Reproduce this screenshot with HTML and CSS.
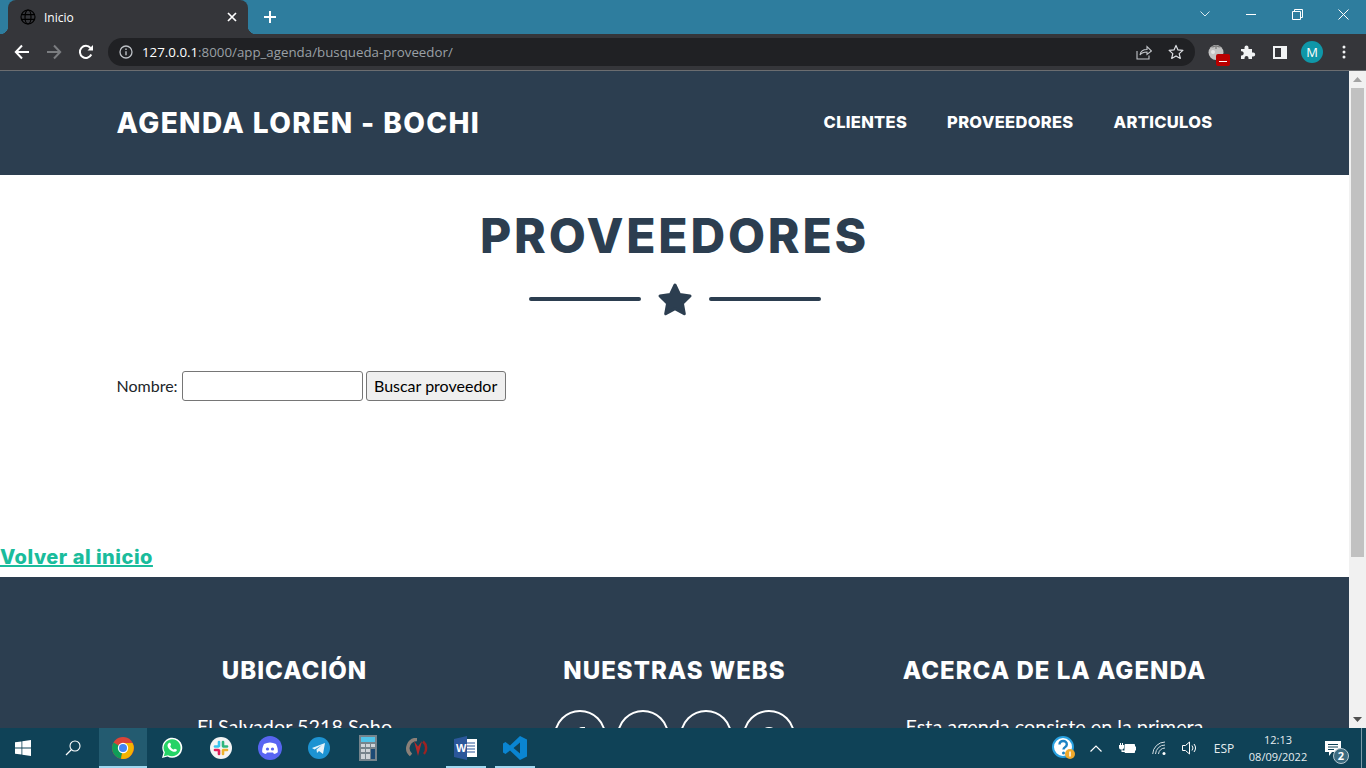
FILE: index.html
```html
<!DOCTYPE html>
<html lang="es">
<head>
<meta charset="utf-8">
<title>Inicio</title>
<link rel="stylesheet" href="styles.css">
</head>
<body>
<div class="screen">
  <header class="browser">
    <div class="tabstrip">
      <div class="tab">
        <svg class="tab-globe" viewBox="0 0 16 16" width="16" height="16"><g fill="none" stroke="#000" stroke-width="1.2"><circle cx="8" cy="8" r="7"/><ellipse cx="8" cy="8" rx="3" ry="7"/><path d="M1 5.6h14M1 10.4h14"/></g></svg>
        <span class="tab-title">Inicio</span>
        <svg class="tab-close" viewBox="0 0 10 10" width="10" height="10"><path d="M1 1l8 8M9 1l-8 8" stroke="#fff" stroke-width="1.7"/></svg>
      </div>
      <svg class="tab-new" viewBox="0 0 12 12" width="12" height="12"><path d="M6 0v12M0 6h12" stroke="#fff" stroke-width="2"/></svg>
      <div class="winctl">
        <span class="winbtn"><svg viewBox="0 0 10 6" width="10" height="6"><path d="M.5.5l4.5 4.500 4.500-4.500" fill="none" stroke="#d8e8ef" stroke-width="1"/></svg></span>
        <span class="winbtn"><svg viewBox="0 0 10 1" width="10" height="1"><path d="M0 .5h10" stroke="#fff"/></svg></span>
        <span class="winbtn"><svg viewBox="0 0 11 11" width="11" height="11"><path d="M.5 2.500h8v8h-8zM2.500 2.500v-2h8v8h-2" fill="none" stroke="#fff"/></svg></span>
        <span class="winbtn"><svg viewBox="0 0 11 11" width="11" height="11"><path d="M.5.5l10 10M10.500.5l-10 10" stroke="#fff"/></svg></span>
      </div>
    </div>
    <div class="toolbar">
      <span class="navbtn"><svg viewBox="0 0 16 16" width="16" height="16"><path d="M15 8H2M8 1.500L1.800 8 8 14.500" fill="none" stroke="#fff" stroke-width="2"/></svg></span>
      <span class="navbtn"><svg viewBox="0 0 16 16" width="16" height="16"><path d="M1 8h13M8 1.500L14.200 8 8 14.500" fill="none" stroke="#7b7d80" stroke-width="2"/></svg></span>
      <span class="navbtn"><svg viewBox="0 0 16 16" width="16" height="16"><path d="M13.300 10.500A6 6 0 1 1 12.500 4" fill="none" stroke="#fff" stroke-width="2"/><path d="M9.500 6.500H15V1z" fill="#fff"/></svg></span>
      <div class="omnibox">
        <svg class="omni-info" viewBox="0 0 14 14" width="14" height="14"><circle cx="7" cy="7" r="6" fill="none" stroke="#bdc1c6" stroke-width="1.300"/><path d="M7 6.200v4M7 3.400v1.500" stroke="#bdc1c6" stroke-width="1.400"/></svg>
        <span class="url"><span class="url-host">127.0.0.1</span>:8000/app_agenda/busqueda-proveedor/</span>
        <span class="omni-actions">
          <svg viewBox="0 0 16 16" width="16" height="16"><path d="M1 7v8h12v-3.500M4 11c.5-3.500 3-5.500 7-5.500V2.500L15.500 7 11 10.500V8C8 8 5.500 9 4 11z" fill="none" stroke="#c4c7cb" stroke-width="1.100"/></svg>
          <svg viewBox="0 0 16 16" width="16" height="16"><path d="M8 1.400l2 4.500 4.900.5-3.700 3.200 1.100 4.800L8 11.900l-4.300 2.500 1.100-4.800L1.100 6.400 6 5.900z" fill="none" stroke="#dfe1e5" stroke-width="1.200" stroke-linejoin="round"/></svg>
        </span>
      </div>
      <div class="extensions">
        <span class="ext ext-tomato"><svg viewBox="0 0 16 16" width="16" height="16"><circle cx="8" cy="8.500" r="7.500" fill="#c2c2c2"/><path d="M8 1.500c-1.500 1-3 1.500-4.500 1.500M8 1.500c1.500 1 3 1.500 4.500 1.500M8 1v4" fill="none" stroke="#777" stroke-width="1.200"/><circle cx="5" cy="8" r="2" fill="#e4e4e4"/></svg><span class="ext-badge"></span></span>
        <span class="ext"><svg viewBox="0 0 16 16" width="16" height="16"><path d="M1 5h3.500V3.500a2 2 0 0 1 4 0V5H12v3.500h1.200a2 2 0 0 1 0 4H12V15H8.500v-1a2 2 0 0 0-4 0v1H1v-3.500h1a2.200 2.200 0 0 0 0-4.300H1z" fill="#f1f3f4"/></svg></span>
        <span class="ext"><svg viewBox="0 0 14 13" width="14" height="13"><path d="M0 0h14v13H0z" fill="#f1f3f4"/><path d="M2 2h6v9H2z" fill="#35363a"/></svg></span>
        <span class="ext"><span class="avatar">M</span></span>
        <span class="ext"><svg viewBox="0 0 4 14" width="4" height="14"><g fill="#f1f3f4"><circle cx="2" cy="2" r="1.500"/><circle cx="2" cy="7" r="1.500"/><circle cx="2" cy="12" r="1.500"/></g></svg></span>
      </div>
    </div>
  </header>

  <div class="viewport">
    <div class="page">
      <nav class="topnav">
        <div class="container topnav-inner">
          <a class="brand" href="#">AGENDA LOREN - BOCHI</a>
          <ul class="menu">
            <li><a href="#">CLIENTES</a></li>
            <li><a href="#">PROVEEDORES</a></li>
            <li><a href="#">ARTICULOS</a></li>
          </ul>
        </div>
      </nav>
      <section class="masthead">
        <h1 class="title">PROVEEDORES</h1>
        <div class="divider">
          <span class="divider-line"></span>
          <svg class="divider-star" viewBox="0 0 36 34" width="36" height="34"><path d="M18 3l4.600 9.600 10.400 1.400-7.600 7.300 1.900 10.400L18 26.700l-9.300 5 1.900-10.400L3 14l10.400-1.400z" fill="#2c3e50" stroke="#2c3e50" stroke-width="3" stroke-linejoin="round"/></svg>
          <span class="divider-line"></span>
        </div>
        <form class="search container">
          <label class="search-label" for="nombre">Nombre:</label>
          <input class="search-input" id="nombre" type="text">
          <button class="search-btn" type="button">Buscar proveedor</button>
        </form>
      </section>
      <a class="back" href="#">Volver al inicio</a>
      <footer class="footer">
        <div class="container footer-grid">
          <div class="footer-col">
            <h4>UBICACIÓN</h4>
            <p>El Salvador 5218 Soho</p>
          </div>
          <div class="footer-col">
            <h4>NUESTRAS WEBS</h4>
            <div class="socials">
              <span class="social"><svg viewBox="0 0 10 18" width="10" height="18"><path d="M3 18V10H0V7h3V4c0-3 2-4 4-4h3v3H8C7 3 6.500 3.500 6.500 4.500V7H10l-.5 3h-3v8z" fill="#fff"/></svg></span>
              <span class="social"><svg viewBox="0 0 18 15" width="18" height="15"><path d="M18 2l-2 1 1.500-2-2.300.8A3.700 3.700 0 0 0 9 5C6 5 3 3.500 1.500 1 .5 3 1 5 2.500 6.500L1 6c0 2 1 3.300 3 4H2.500c.5 1.500 2 2.500 3.500 2.500C4.500 14 2 14.500 0 14c6 3 16 1 16-9.500z" fill="#fff"/></svg></span>
              <span class="social"><svg viewBox="0 0 16 16" width="16" height="16"><path d="M0 5.500h3.500V16H0zM1.700 0a2 2 0 1 1 0 4 2 2 0 0 1 0-4zM6 5.500h3.200V7c.6-1 1.800-1.800 3.300-1.800C15.500 5.200 16 7.500 16 10v6h-3.500v-5.500c0-1.500-.3-2.500-1.600-2.500-1.400 0-1.900 1-1.900 2.500V16H6z" fill="#fff"/></svg></span>
              <span class="social"><svg viewBox="0 0 18 18" width="18" height="18"><circle cx="9" cy="9" r="8" fill="none" stroke="#fff" stroke-width="2"/></svg></span>
            </div>
          </div>
          <div class="footer-col">
            <h4>ACERCA DE LA AGENDA</h4>
            <p>Esta agenda consiste en la primera</p>
          </div>
        </div>
      </footer>
    </div>
    <div class="scrollbar">
      <span class="scroll-arrow"><svg viewBox="0 0 9 5" width="9" height="5"><path d="M4.500 0L9 5H0z" fill="#a3a3a3"/></svg></span>
      <span class="scroll-track"><span class="scroll-thumb"></span></span>
      <span class="scroll-arrow"><svg viewBox="0 0 9 5" width="9" height="5"><path d="M0 0h9L4.500 5z" fill="#505050"/></svg></span>
    </div>
  </div>

  <footer class="taskbar">
    <span class="task task-start"><svg viewBox="0 0 16 16" width="16" height="16"><path d="M0 2.300l6.500-.9v6.200H0zM7.300 1.300L16 0v7.600H7.300zM0 8.400h6.500v6.200L0 13.700zM7.300 8.400H16V16l-8.700-1.300z" fill="#fff"/></svg></span>
    <span class="task task-search"><svg viewBox="0 0 16 16" width="16" height="16"><circle cx="10" cy="6" r="5" fill="none" stroke="#fff" stroke-width="1.100"/><path d="M6.500 9.500L1 15" stroke="#fff" stroke-width="1.300"/></svg></span>
    <span class="task task-active"><svg viewBox="0 0 22 22" width="22" height="22"><circle cx="11" cy="11" r="11" fill="#db4437"/><path d="M11 11L1.500 5.500A11 11 0 0 0 9 21.800z" fill="#0f9d58"/><path d="M11 6h9.500A11 11 0 0 1 9 21.800L11 11z" fill="#f4b400"/><circle cx="11" cy="11" r="5.200" fill="#fff"/><circle cx="11" cy="11" r="4" fill="#4285f4"/></svg></span>
    <span class="task"><svg viewBox="0 0 22 22" width="22" height="22"><path d="M1 21l1.500-5.500A10 10 0 1 1 6.500 19.500z" fill="#fff"/><path d="M2.800 19.200l1.100-3.900A8.500 8.500 0 1 1 7 18.200z" fill="#25d366"/><path d="M8 6c1-.6 1.500 0 2 1.500.2.800-.8 1.200-.7 1.800.4 1.300 1.800 2.700 3 3.200.6.100 1-.9 1.700-.8 1.600.6 2.200 1 1.700 2-.6 1.200-2.300 1.500-4 .8C9 13.500 7 11 6.600 9.200 6.300 7.800 7 6.600 8 6z" fill="#fff"/></svg></span>
    <span class="task"><svg viewBox="0 0 22 22" width="22" height="22"><circle cx="11" cy="11" r="11" fill="#f4f4f4"/><g stroke-width="2.600" stroke-linecap="round"><path d="M9 5v4" stroke="#36c5f0"/><path d="M5 9.500h3" stroke="#36c5f0"/><path d="M13 5v4" stroke="#2eb67d"/><path d="M13.500 9.500H17" stroke="#2eb67d"/><path d="M13 13.500v3.500" stroke="#ecb22e"/><path d="M13.500 13H17" stroke="#ecb22e"/><path d="M9 13.500v3.500" stroke="#e01e5a"/><path d="M5 13h3" stroke="#e01e5a"/></g></svg></span>
    <span class="task"><svg viewBox="0 0 24 24" width="24" height="24"><circle cx="12" cy="12" r="12" fill="#5865f2"/><path d="M6 8c4-2 8-2 12 0 1.500 3 2 5.500 1.800 8.200-1.300 1-2.600 1.500-3.800 1.800l-1-1.500H9L8 18c-1.200-.3-2.500-.8-3.800-1.800C4 13.500 4.500 11 6 8z" fill="#fff"/><circle cx="9.500" cy="13" r="1.600" fill="#5865f2"/><circle cx="14.500" cy="13" r="1.600" fill="#5865f2"/></svg></span>
    <span class="task"><svg viewBox="0 0 22 22" width="22" height="22"><circle cx="11" cy="11" r="11" fill="#1d93d2"/><path d="M4 11l13-5-2 11-4-3-2 2-.5-3.500L14 8l-7.500 4.500z" fill="#e6f3fa"/></svg></span>
    <span class="task"><svg viewBox="0 0 18 26" width="18" height="26"><path d="M0 0h18v26H0z" fill="#76848c"/><path d="M2 2h14v5H2z" fill="#4fc3e8"/><path d="M2 9h4v3H2zM7 9h4v3H7zM12 9h4v3h-4zM2 14h4v3H2zM7 14h4v3H7zM2 19h4v5H2zM7 19h4v5H7z" fill="#ced4d8"/><path d="M12 14h4v10h-4z" fill="#1c4a75"/></svg></span>
    <span class="task"><svg viewBox="0 0 24 20" width="24" height="20"><path d="M12 1.500A8.800 8.800 0 0 0 6 17" fill="none" stroke="#8b8078" stroke-width="3.500"/><path d="M9 3l4 15 4-15-4 5.500z" fill="#b52a2a"/><path d="M18 3.500a8.800 8.800 0 0 1 1 12.500" fill="none" stroke="#9c2222" stroke-width="2.500"/></svg></span>
    <span class="task task-open"><svg viewBox="0 0 23 24" width="23" height="24"><path d="M7 3h16v18H7z" fill="#fff"/><path d="M12 7h9M12 10h9M12 13h9M12 16h9" stroke="#2b579a" stroke-width="1.200"/><path d="M0 3l13-3v24L0 21z" fill="#2b579a"/><text class="word-w" x="2" y="16">W</text></svg></span>
    <span class="task task-open"><svg viewBox="0 0 24 24" width="24" height="24"><path d="M17 0l7 3.500v17L17 24 7 14.500 2.500 18 0 16.500V7.500L2.500 6 7 9.500zM17 6.500L10.500 12l6.500 5.500z" fill="#0a85d1"/></svg></span>
    <div class="tray">
      <span class="tray-item tray-help"><svg viewBox="0 0 24 24" width="24" height="24"><circle cx="11" cy="11" r="10" fill="#fff" stroke="#29a1e0" stroke-width="2"/><path d="M7.500 8.500c0-5 7.500-4.500 7.300 0 0 2.700-3.300 2.500-3.300 5" fill="none" stroke="#1d82c4" stroke-width="2.400"/><circle cx="11.500" cy="17" r="1.500" fill="#1d82c4"/><circle cx="18" cy="18" r="5" fill="#f0a92c"/><path d="M18 15.500v5" stroke="#fff" stroke-width="1.500"/></svg></span>
      <span class="tray-item tray-chevron"><svg viewBox="0 0 12 7" width="12" height="7"><path d="M.5 6.500L6 1l5.500 5.500" fill="none" stroke="#fff" stroke-width="1.200"/></svg></span>
      <span class="tray-item tray-battery"><svg viewBox="0 0 17 11" width="17" height="11"><path d="M0 2h5v2.500a2 2 0 0 1-1.500 1.800V7.500H6V9H2.500V6.300A2 2 0 0 1 0 4.500zM1 0h1v2H1zM3 0h1v2H3z" fill="#fff"/><path d="M6 1.500h9.500v8H6z" fill="#fff" stroke="#fff"/><path d="M16 3.500h1v4h-1z" fill="#fff"/></svg></span>
      <span class="tray-item tray-wifi"><svg viewBox="0 0 14 14" width="14" height="14"><g fill="none" stroke="#d5dfe4" stroke-width="1"><path d="M.7 13A12.500 12.500 0 0 1 13 1"/><path d="M3.500 13A9.500 9.500 0 0 1 13 4"/><path d="M6.500 13A6.500 6.500 0 0 1 13 7"/></g><circle cx="12" cy="12.500" r="1.500" fill="#fff"/></svg></span>
      <span class="tray-item tray-volume"><svg viewBox="0 0 16 14" width="16" height="14"><path d="M.5 4.500h3l4-3.500v12l-4-3.500h-3z" fill="none" stroke="#fff"/><path d="M10 4.500a4 4 0 0 1 0 5M12 3a6.500 6.500 0 0 1 0 8" fill="none" stroke="#fff"/></svg></span>
      <span class="tray-item tray-lang">ESP</span>
      <span class="tray-item tray-clock"><span>12:13</span><span>08/09/2022</span></span>
      <span class="tray-item tray-notif"><svg viewBox="0 0 16 15" width="16" height="15"><path d="M0 0h16v11H7l-3 4v-4H0z" fill="#fff"/><path d="M3 3.500h10M3 6h10M3 8.500h6" stroke="#0f4257"/></svg><span class="notif-count">2</span></span>
      <span class="tray-desktop"></span>
    </div>
  </footer>
</div>
</body>
</html>
```

FILE: styles.css
```css
* { box-sizing: border-box; }
html, body { margin: 0; height: 100%; overflow: hidden; }
body { font-family: "Lato", "Liberation Sans", sans-serif; background: #fff; color: #212529; }
.screen { width: 1366px; height: 768px; display: flex; flex-direction: column; overflow: hidden; }

.browser { flex: 0 0 71px; display: flex; flex-direction: column; background: #35363a; font-family: "Open Sans", "Liberation Sans", sans-serif; }
.tabstrip { flex: 0 0 34px; background: #2e7d9e; display: flex; align-items: stretch; padding-left: 8px; }
.tab { position: relative; width: 240px; background: #35363a; border-radius: 8px 8px 0 0; display: flex; align-items: center; padding: 0 11px 0 12px; }
.tab::before, .tab::after { content: ""; position: absolute; bottom: 0; width: 8px; height: 8px; }
.tab::before { left: -8px; background: radial-gradient(circle at 0 0, transparent 8px, #35363a 8.500px); }
.tab::after { right: -8px; background: radial-gradient(circle at 100% 0, transparent 8px, #35363a 8.500px); }
.tab-globe { flex: none; }
.tab-title { margin-left: 8px; font-size: 12px; color: #fff; flex: 1; }
.tab-new { align-self: center; margin-left: 16px; }
.winctl { margin-left: auto; display: flex; height: 28px; }
.winbtn { width: 46px; display: flex; align-items: center; justify-content: center; }

.toolbar { flex: 1; display: flex; align-items: center; padding-left: 6px; border-bottom: 1px solid #6b6d70; }
.navbtn { width: 32px; display: flex; justify-content: center; }
.omnibox { margin-left: 6px; width: 1087px; height: 28px; background: #202124; border-radius: 14px; display: flex; align-items: center; padding: 0 11px; }
.omni-info { flex: none; }
.url { margin-left: 9px; font-size: 13.300px; color: #9aa0a6; white-space: nowrap; }
.url-host { color: #fff; }
.omni-actions { margin-left: auto; display: flex; gap: 16px; }
.extensions { display: flex; margin-left: 5px; }
.ext { position: relative; width: 32px; height: 28px; display: flex; align-items: center; justify-content: center; }
.ext-badge { position: absolute; left: 16px; top: 16px; width: 14px; height: 12px; background: #b90000; border-radius: 2px; }
.ext-badge::after { content: ""; position: absolute; left: 3px; right: 3px; top: 7px; height: 1px; background: #fff; }
.avatar { width: 22px; height: 22px; border-radius: 50%; background: #0f97a8; color: #fff; font-size: 13px; display: flex; align-items: center; justify-content: center; }

.viewport { flex: 1; display: flex; min-height: 0; overflow: hidden; }
.page { flex: 1; min-width: 0; display: flex; flex-direction: column; overflow: hidden; }
.container { width: 1140px; margin: 0 auto; padding: 0 12px; }

.topnav { flex: 0 0 104px; background: #2c3e50; display: flex; align-items: center; }
.topnav-inner { display: flex; align-items: center; justify-content: space-between; }
.brand { font-family: "Inter", "Liberation Sans", sans-serif; font-weight: 800; font-size: 28px; letter-spacing: 1.400px; color: #fff; text-decoration: none; }
.menu { display: flex; list-style: none; margin: 0; padding: 0; }
.menu a { display: block; padding: 0 20px 2px; font-family: "Inter", "Liberation Sans", sans-serif; font-weight: 800; font-size: 16.500px; letter-spacing: .3px; color: #fff; text-decoration: none; }

.masthead { flex: 0 0 371px; padding-top: 33px; display: flex; flex-direction: column; align-items: center; }
.title { margin: 0; font-family: "Inter", "Liberation Sans", sans-serif; font-weight: 800; font-size: 48px; line-height: 56px; letter-spacing: 2.800px; color: #2c3e50; }
.divider { display: flex; align-items: center; justify-content: center; gap: 16px; margin-top: 18px; height: 34px; }
.divider-line { width: 112px; height: 4px; border-radius: 2px; background: #2c3e50; }
.divider-star { flex: none; }
.search { margin-top: 55px; display: flex; align-items: center; gap: 3px; font-size: 16px; height: 30px; }
.search-label { color: #212529; margin-right: 1px; padding-bottom: 2px; }
.search-input { width: 181px; height: 30px; border: 1px solid #767676; border-radius: 3px; background: #fff; padding: 1px 2px; }
.search-btn { width: 140px; height: 30px; border: 1px solid #767676; border-radius: 3px; background: #efefef; font-family: inherit; font-size: 16px; color: #000; padding: 0 0 2px; }

.back { flex: 0 0 31px; font-family: "Inter", "Liberation Sans", sans-serif; font-weight: 800; font-size: 20px; line-height: 22px; letter-spacing: .5px; color: #1abc9c; text-decoration: underline; align-self: flex-start; }

.footer { flex: 1; background: #2c3e50; color: #fff; padding-top: 79px; }
.footer-grid { display: grid; grid-template-columns: repeat(3, 380px); padding: 0; }
.footer-col { text-align: center; }
.footer-col h4 { margin: 0; font-family: "Inter", "Liberation Sans", sans-serif; font-weight: 800; font-size: 24px; line-height: 29px; letter-spacing: 1px; }
.footer-col p { margin: 26px 0 0; font-size: 19.800px; line-height: 30px; white-space: nowrap; }
.socials { display: flex; justify-content: center; gap: 11px; margin-top: 25px; }
.social { width: 52px; height: 52px; border: 2px solid #fff; border-radius: 50%; display: flex; align-items: center; justify-content: center; }

.scrollbar { flex: 0 0 17px; background: #f1f1f1; display: flex; flex-direction: column; }
.scroll-arrow { flex: 0 0 17px; display: flex; align-items: center; justify-content: center; }
.scroll-track { flex: 1; }
.scroll-thumb { display: block; height: 469px; margin: 0 2px; background: #c1c1c1; }

.taskbar { flex: 0 0 40px; background: #0f4257; display: flex; align-items: stretch; color: #fff; font-family: "Open Sans", "Liberation Sans", sans-serif; }
.task { width: 49px; display: flex; align-items: center; justify-content: center; }
.task-start { width: 46px; }
.task-search { width: 53px; }
.task-active { width: 48px; background: #235b70; border-bottom: 2px solid #9fd8f0; padding-top: 2px; }
.task-open { border-bottom: 2px solid #9fd8f0; padding-top: 2px; margin: 0 4.500px; width: 40px; }
.word-w { font-family: "Liberation Sans", sans-serif; font-size: 11px; font-weight: 700; fill: #fff; }
.tray { margin-left: auto; display: flex; align-items: stretch; }
.tray-item { display: flex; align-items: center; justify-content: center; font-size: 12px; }
.tray-help { width: 31px; }
.tray-chevron { width: 33px; }
.tray-battery { width: 31px; }
.tray-wifi { width: 32px; }
.tray-volume { width: 30px; }
.tray-lang { width: 38px; color: #e6edf0; }
.tray-clock { width: 70px; flex-direction: column; gap: 3px; line-height: 14px; font-size: 11px; color: #e6edf0; }
.tray-notif { position: relative; width: 48px; padding-right: 8px; }
.notif-count { position: absolute; left: 20px; top: 20px; width: 16px; height: 16px; border-radius: 50%; background: #3b6b80; border: 1px solid #b7c9d1; font-size: 11px; font-weight: 700; line-height: 14px; text-align: center; }
.tray-desktop { width: 5px; border-left: 1px solid #7d9aa8; }
```
